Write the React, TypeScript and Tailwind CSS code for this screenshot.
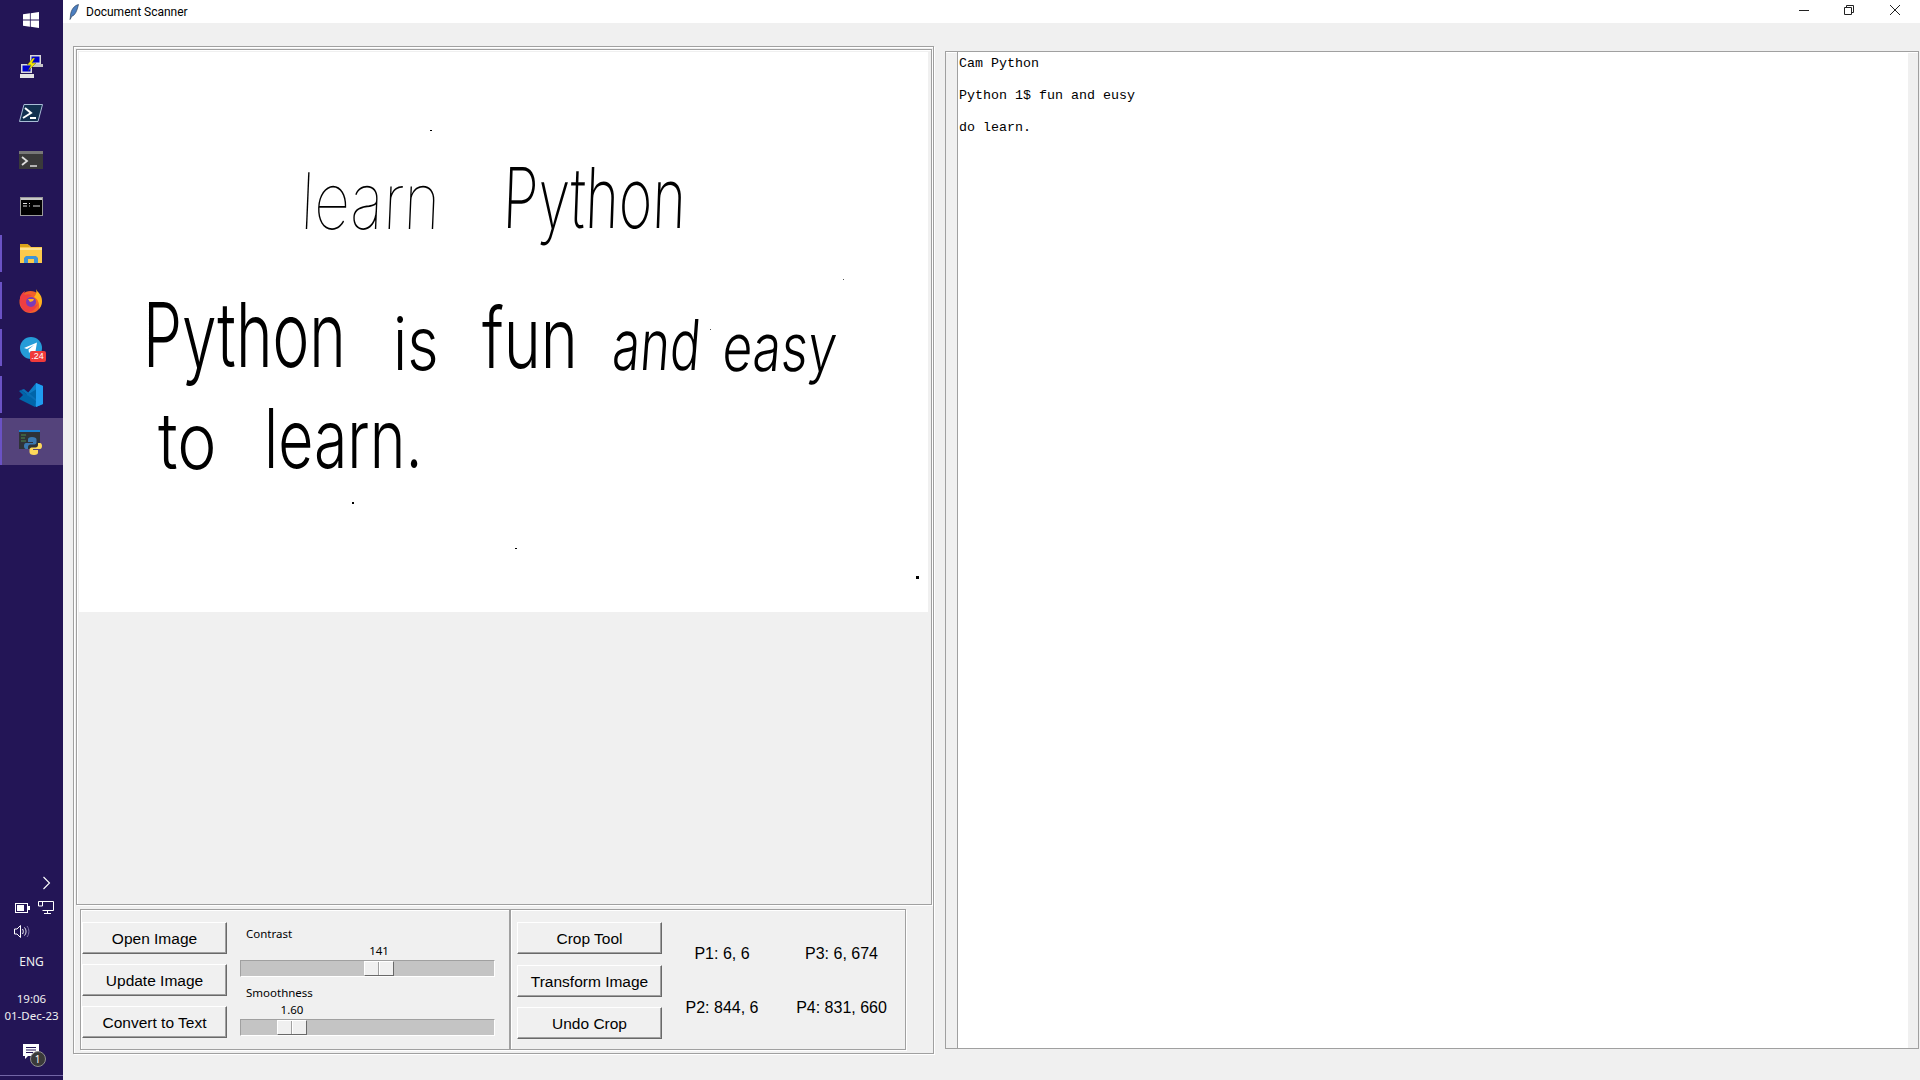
import type { ReactNode } from "react";

const sans = "font-['Liberation_Sans',Arial,sans-serif]";
const ui = "font-['Noto_Sans',sans-serif]";

function TaskIcon({ children, accent, active, first }: { children: ReactNode; accent?: boolean; active?: boolean; first?: boolean }) {
  return (
    <div className={`relative flex w-full items-center justify-center ${first ? "h-[42px]" : "h-[47px]"} ${active ? "bg-[#54437b]" : ""}`}>
      {accent && <span className={`absolute left-0 w-[2px] bg-[#6a52c4] ${active ? "inset-y-0" : "inset-y-[5px]"}`} />}
      {children}
    </div>
  );
}

function Taskbar() {
  return (
    <div className={`flex h-full w-[63px] shrink-0 flex-col items-center bg-[#231556] text-white ${ui}`}>
      <TaskIcon first>
        <svg width="16" height="16" viewBox="0 0 16 16" fill="#fff" className="-ml-[1px] -mt-[2px]">
          <path d="M0 2.3 6.9 1.3V7.6H0ZM7.7 1.2 16 0V7.6H7.7ZM0 8.4H6.9V14.7L0 13.7ZM7.700 8.400H16V16L7.700 14.800Z" />
        </svg>
      </TaskIcon>
      <TaskIcon>
        <svg width="24" height="24" viewBox="0 0 24 24" className="-ml-[1px]">
          <rect x="11" y="1" width="11" height="9" fill="#d8d8d8" />
          <rect x="12.5" y="2.5" width="8" height="6" fill="#0000c8" />
          <rect x="13" y="10" width="11" height="3" fill="#c4c4c4" />
          <rect x="2" y="10" width="11" height="9" fill="#d8d8d8" />
          <rect x="3.5" y="11.5" width="8" height="6" fill="#0000c8" />
          <rect x="1" y="20" width="14" height="4" fill="#e4e4e4" />
          <path d="M14 4 8 11h4l-3 6 8-8h-4l3-5Z" fill="#f4e800" stroke="#333" strokeWidth=".4" />
        </svg>
      </TaskIcon>
      <TaskIcon>
        <svg width="24" height="18" viewBox="0 0 24 18" className="-ml-[1px]">
          <path d="M5 .5H23.500L19 17.500H.500Z" fill="#12304f" stroke="#a9bcd6" />
          <path d="m6 4 6 5-8 5" fill="none" stroke="#fff" strokeWidth="2" />
          <path d="M11 14h6" stroke="#fff" strokeWidth="2" />
        </svg>
      </TaskIcon>
      <TaskIcon>
        <svg width="24" height="18" viewBox="0 0 24 18" className="-ml-[1px]">
          <rect width="24" height="18" fill="#3a3a3a" />
          <rect width="24" height="3" fill="#777" />
          <path d="m3 6 5 4-5 4" fill="none" stroke="#ddd" strokeWidth="1.800" />
          <path d="M11 15h7" stroke="#ddd" strokeWidth="1.500" />
        </svg>
      </TaskIcon>
      <TaskIcon>
        <svg width="23" height="19" viewBox="0 0 23 19" className="-ml-[1px]">
          <rect x=".5" y=".5" width="22" height="18" fill="#000" stroke="#9a9a9a" />
          <rect x="1" y="1" width="21" height="2" fill="#c8c8c8" />
          <path d="M3 6.500H7M3 9H7M9 6.500h1M9 9h1M13 9h7" stroke="#ddd" />
        </svg>
      </TaskIcon>
      <TaskIcon accent>
        <svg width="22" height="19" viewBox="0 0 22 19" className="-ml-[1px]">
          <path d="M0 1h9l2 2h11v16H0Z" fill="#fcc94b" />
          <path d="M0 0h8l2 3H0Z" fill="#d9a21b" />
          <path d="M0 6h22V4H0Z" fill="#fde28d" />
          <path d="M4 19v-5l2-2h10l2 2v5h-4v-4H8v4Z" fill="#3f94d6" />
        </svg>
      </TaskIcon>
      <TaskIcon accent>
        <svg width="24" height="24" viewBox="0 0 24 24" className="-ml-[1px]">
          <circle cx="11.500" cy="13" r="11" fill="#f2612a" />
          <path d="M17 0c1 3 6 5 6 12 0 3-1 6-3 8 1-5-1-10-5-12 2-2 3-5 2-8Z" fill="#ffb21e" />
          <path d="M1 8c1-3 3-5 5-6-1 2-1 3 0 4 2-1 5-1 7 1-3 0-5 2-5 5s3 5 6 5c2 0 3-1 5-2-2 5-6 8-9 8-6 0-10-6-9-15Z" fill="#ef3e42" />
          <circle cx="12" cy="13" r="5" fill="#7a3bb8" />
          <path d="M9 10h6l-1 2-3 1Z" fill="#ffb21e" />
        </svg>
      </TaskIcon>
      <TaskIcon accent>
        <div className="relative mt-[3px] h-[24px] w-[24px]">
          <svg width="22" height="22" viewBox="0 0 22 22" className="absolute left-0 top-0">
            <circle cx="11" cy="11" r="11" fill="#259cd8" />
            <path d="M4 11 17 5.500 15 17l-4-3-2 2-.500-3.500 5.500-4.500-7 4Z" fill="#fff" />
          </svg>
          <span className="absolute left-[10px] top-[14px] flex h-[11px] w-[16px] items-center justify-center rounded-[2px] bg-[#f03a3a] font-['Liberation_Sans',sans-serif] text-[9px] leading-none text-white">.24</span>
        </div>
      </TaskIcon>
      <TaskIcon accent>
        <svg width="24" height="24" viewBox="0 0 24 24" className="-ml-[1px] mt-[1px]">
          <path d="M17 0 24 3v18l-7 3L6 13.500Z" fill="#0c7cc4" />
          <path d="M17 0 24 3v18l-7 3Z" fill="#1f9cf0" />
          <path d="M17 6.500 8 12l9 5.500ZM0 8l2-1 15 11-1 6L0 16l4-4Z" fill="#0065a9" />
          <path d="M2 7 5 6l12 10v2Z" fill="#0a6fb5" />
        </svg>
      </TaskIcon>
      <TaskIcon accent active>
        <svg width="24" height="26" viewBox="0 0 24 26" className="-ml-[1px] mt-[2px]">
          <rect x="0" y="0" width="21" height="19" fill="#2e3238" />
          <rect x="0" y="0" width="21" height="2" fill="#1a7fd0" />
          <path d="M2 5h5M2 8h4M2 11h5" stroke="#4d8a4d" />
          <path d="M13 7c-3 0-4 1-4 2.500V12h5v1H7c-1.500 0-2 1.500-2 3s.5 3 2 3h2v-2c0-1.500 1-2.500 2.500-2.500h4c1 0 2-1 2-2V9.500C17.500 8 16 7 13 7Z" fill="#3b78b0" />
          <path d="M15 25c3 0 4-1 4-2.500V20h-5v-1h7c1.500 0 2-1.500 2-3s-.5-3-2-3h-2v2c0 1.500-1 2.500-2.500 2.500h-4c-1 0-2 1-2 2v2.500C10.500 24 12 25 15 25Z" fill="#fdd85a" />
        </svg>
      </TaskIcon>
      <div className="mt-auto flex w-full flex-col items-center">
        <svg width="9" height="14" viewBox="0 0 9 14" className="ml-[29px]">
          <path d="m1.500 1 6 6-6 6" fill="none" stroke="#fff" strokeWidth="1.100" />
        </svg>
        <div className="mt-[11px] flex w-full items-center gap-[8px] pl-[15px]">
          <svg width="15" height="10" viewBox="0 0 15 10">
            <rect x=".5" y=".5" width="12" height="9" fill="none" stroke="#fff" />
            <rect x="2" y="2" width="7" height="6" fill="#fff" />
            <rect x="13" y="3" width="2" height="4" fill="#fff" />
          </svg>
          <svg width="16" height="13" viewBox="0 0 16 13">
            <path d="M3.500.5H15.500V9.500H4.500M.5.500H4.500V5H.5ZM9.500 9.500V12.500M6 12.500h7" fill="none" stroke="#fff" />
          </svg>
        </div>
        <div className="mt-[11px] flex w-full pl-[14px]">
          <svg width="16" height="13" viewBox="0 0 16 13">
            <path d="M.5 4H3L6.500.5V12.500L3 9H.5Z" fill="none" stroke="#fff" />
            <path d="M8.500 4c1 1.500 1 3.500 0 5M10.500 2.500c2 2.500 2 5.500 0 8" fill="none" stroke="#fff" />
            <path d="M13 1c2.500 3 2.500 8 0 11" fill="none" stroke="#7d72a6" />
          </svg>
        </div>
        <div className="mt-[16px] text-[12px] leading-[16px] text-[#f0f0f0]">ENG</div>
        <div className="mt-[20px] text-[11.5px] leading-[17px] text-[#f0f0f0]">19:06</div>
        <div className="text-[11.5px] leading-[17px] text-[#f0f0f0]">01-Dec-23</div>
        <div className="relative mt-[21px] h-[20px] w-[16px] translate-x-[-1px]">
          <svg width="16" height="16" viewBox="0 0 16 16" className="absolute left-0 top-[-1px]">
            <path d="M0 0H16V12H5L2 15V12H0Z" fill="#fff" />
            <path d="M3 3.500H13M3 6H13M3 8.500H10" stroke="#231556" />
          </svg>
          <span className="absolute left-[7px] top-[6px] flex h-[16px] w-[16px] items-center justify-center rounded-full border border-[#8f8f8f] bg-[#3a3a3a] text-[10px] leading-none text-white">1</span>
        </div>
        <div className="mt-[10px] h-[1px] w-full bg-[#7266a6]" />
        <div className="h-[4px]" />
      </div>
    </div>
  );
}

function TkButton({ children, className }: { children: ReactNode; className?: string }) {
  return (
    <button className={`flex h-[32px] w-[145px] items-center justify-center border border-b-[#696969] border-l-white border-r-[#696969] border-t-white bg-[#f0f0f0] pt-[1px] text-[15.5px] leading-none text-black shadow-[inset_-1px_-1px_0_#a0a0a0] ${sans} ${className ?? ""}`}>
      {children}
    </button>
  );
}

function Slider({ thumbLeft }: { thumbLeft: string }) {
  return (
    <div className={`flex h-[17px] w-[255px] items-center border border-b-white border-l-[#a0a0a0] border-r-white border-t-[#a0a0a0] bg-[#c4c4c4] ${thumbLeft}`}>
      <div className="flex h-[15px] w-[30px] border border-b-[#696969] border-l-white border-r-[#696969] border-t-white bg-[#f0f0f0]">
        <span className="ml-[13px] h-full w-[2px] border-l border-r border-l-[#a0a0a0] border-r-white" />
      </div>
    </div>
  );
}

function Word({ children, className }: { children: ReactNode; className: string }) {
  return (
    <span className={`inline-block shrink-0 origin-left whitespace-nowrap font-['Inter',sans-serif] leading-none text-black ${className}`}>
      {children}
    </span>
  );
}

function Scan() {
  return (
    <div className="relative h-[560px] w-[849px] bg-white">
      <div className="flex h-[188px] items-end pl-[222px]">
        <Word className="w-[202px] -skew-x-3 scale-x-[0.8] text-[78px] font-thin">learn</Word>
        <Word className="w-[180px] -skew-x-3 scale-x-[0.68] text-[84px] font-extralight">Python</Word>
      </div>
      <div className="mt-[66px] flex h-[74px] items-end pl-[64px]">
        <Word className="w-[250px] scale-x-[0.69] text-[90px] font-light">Python</Word>
        <Word className="w-[89px] scale-x-[0.82] text-[74px] font-light">is</Word>
        <Word className="w-[131px] scale-x-[0.75] text-[84px] font-light">fun</Word>
        <Word className="w-[110px] -skew-x-6 scale-x-[0.72] text-[70px] font-light">and</Word>
        <Word className="w-[120px] -skew-x-6 scale-x-[0.78] text-[66px] font-light">easy</Word>
      </div>
      <div className="mt-[30px] flex h-[70px] items-end pl-[79px]">
        <Word className="w-[106px] scale-x-[0.85] text-[78px] font-light">to</Word>
        <Word className="w-[160px] scale-x-[0.74] text-[82px] font-light">learn.</Word>
      </div>
      <span className="absolute left-[351px] top-[78px] h-[1px] w-[2px] bg-black" />
      <span className="absolute left-[764px] top-[227px] h-[1px] w-[1px] bg-[#555]" />
      <span className="absolute left-[631px] top-[277px] h-[1px] w-[1px] bg-[#555]" />
      <span className="absolute left-[273px] top-[450px] h-[2px] w-[2px] bg-black" />
      <span className="absolute left-[436px] top-[496px] h-[1px] w-[2px] bg-black" />
      <span className="absolute left-[837px] top-[524px] h-[3px] w-[3px] bg-black" />
    </div>
  );
}

function Coord({ children }: { children: ReactNode }) {
  return <div className={`flex h-[20px] items-center justify-center whitespace-nowrap text-[16px] leading-none text-black ${sans}`}>{children}</div>;
}

function Groove({ className, children }: { className: string; children?: ReactNode }) {
  return (
    <div className={`border border-[#a0a0a0] shadow-[inset_1px_1px_0_#fff,1px_1px_0_#fff] ${className}`}>{children}</div>
  );
}

export default function App() {
  return (
    <div className="flex h-screen w-full overflow-hidden bg-[#f0f0f0]">
      <Taskbar />
      <div className="flex min-w-0 flex-1 flex-col">
        <div className="flex h-[23px] shrink-0 items-center bg-white font-['Roboto',sans-serif]">
          <svg width="10" height="16" viewBox="0 0 10 16" className="ml-[6px]">
            <path d="M9.500.5C5 1.500 2 6 1.500 11 1.400 12.500 1.300 14 1 15.500 2 14 2.500 13 3 12c3-.5 5-5 6.500-11.500Z" fill="#4c7fc0" stroke="#20344f" strokeWidth=".6" />
          </svg>
          <span className="ml-[7px] text-[12px] leading-none text-black">Document Scanner</span>
          <div className="ml-auto flex items-center pb-[3px]">
            <svg width="10" height="10" viewBox="0 0 10 10" className="mr-[35px]"><path d="M0 5.500H10" stroke="#222" /></svg>
            <svg width="10" height="10" viewBox="0 0 10 10" className="mr-[36px]"><path d="M.5 2.500h7v7h-7ZM2.500 2.500v-2h7v7h-2" fill="none" stroke="#222" /></svg>
            <svg width="10" height="10" viewBox="0 0 10 10" className="mr-[20px]"><path d="M0 0 10 10M10 0 0 10" stroke="#222" /></svg>
          </div>
        </div>
        <div className="flex flex-1 items-start pl-[10px] pt-[23px]">
          <Groove className="flex h-[1008px] w-[861px] shrink-0 flex-col pl-[2px] pt-[2px]">
            <Groove className="h-[856px] w-[856px] pl-[2px] pt-[2px]">
              <Scan />
            </Groove>
            <div className="mt-[4px] flex pl-[4px]">
              <Groove className="flex h-[141px] w-[430px] pl-[1px] pt-[12px]">
                <div className="flex flex-col gap-[10px]">
                  <TkButton>Open Image</TkButton>
                  <TkButton>Update Image</TkButton>
                  <TkButton>Convert to Text</TkButton>
                </div>
                <div className={`-mt-[12px] ml-[13px] flex flex-col text-[11.5px] text-black ${ui}`}>
                  <div className="mt-[16px] h-[16px] pl-[6px] leading-[16px]">Contrast</div>
                  <div className="h-[18px] pl-[124px] leading-[17px]"><span className="block w-[30px] text-center">141</span></div>
                  <Slider thumbLeft="pl-[123px]" />
                  <div className="mt-[8px] h-[16px] pl-[6px] leading-[16px]">Smoothness</div>
                  <div className="h-[18px] pl-[37px] leading-[17px]"><span className="block w-[30px] text-center">1.60</span></div>
                  <Slider thumbLeft="pl-[36px]" />
                </div>
              </Groove>
              <Groove className="flex h-[141px] w-[396px] pl-[6px] pt-[12px]">
                <div className="flex flex-col">
                  <TkButton>Crop Tool</TkButton>
                  <TkButton className="mt-[11px]">Transform Image</TkButton>
                  <TkButton className="mt-[10px]">Undo Crop</TkButton>
                </div>
                <div className="grid h-[96px] w-[239px] grid-cols-[120px_119px] content-between pt-[22px]">
                  <Coord>P1: 6, 6</Coord>
                  <Coord>P3: 6, 674</Coord>
                  <Coord>P2: 844, 6</Coord>
                  <Coord>P4: 831, 660</Coord>
                </div>
              </Groove>
            </div>
          </Groove>
          <div className="ml-[11px] mt-[5px] flex h-[998px] w-[974px] shrink-0 border border-[#a0a0a0] pl-[11px] shadow-[inset_0_1px_0_#fff]">
            <div className="h-full w-[951px] overflow-hidden border-l border-[#a0a0a0] bg-white pl-[1px] font-['Liberation_Mono',monospace] text-[13.33px] leading-[32px] text-black">
              <div className="-mt-[4px]">Cam Python</div>
              <div>Python 1$ fun and eusy</div>
              <div>do learn.</div>
            </div>
          </div>
        </div>
      </div>
    </div>
  );
}
